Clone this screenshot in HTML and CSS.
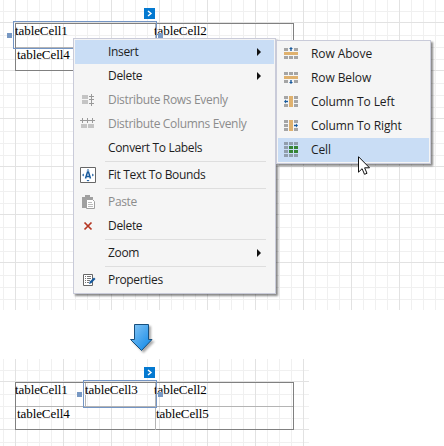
FILE: index.html
```html
<!DOCTYPE html>
<html lang="en">
<head>
<meta charset="utf-8">
<title>Insert table cell</title>
<link rel="stylesheet" href="styles.css">
</head>
<body>
<main class="stage">
  <section class="surface before">
    <div class="table">
      <div class="cell c1">tableCell1</div><div class="cell">tableCell2</div>
      <div class="cell c4">tableCell4</div><div class="cell"></div>
    </div>
    <div class="selection first"></div>
    <i class="handle h1"></i><i class="handle h2"></i>
    <svg class="tag" viewBox="0 0 11 11"><path d="M0 0h11v11H0z" fill="#0479d0"/><path d="M4 3l3 2.5L4 8" fill="none" stroke="#fff" stroke-width="1.4"/></svg>
  </section>
  <div class="gap">
    <svg class="arrow" viewBox="0 0 26 32"><defs><linearGradient id="g" x1="0" y1="0" x2="1" y2="1"><stop offset="0" stop-color="#8bc8f5"/><stop offset="1" stop-color="#0784e6"/></linearGradient></defs><path d="M5.500 2.500h14v15h3.500L12.500 28.500 1.500 17.500h4z" fill="url(#g)" stroke="#174f7d"/></svg>
  </div>
  <section class="surface after">
    <div class="table">
      <div class="cell c1">tableCell1</div><div class="cell">tableCell2</div>
      <div class="cell c4">tableCell4</div><div class="cell c5">tableCell5</div>
    </div>
    <div class="selection third">tableCell3</div>
    <i class="handle h3"></i><i class="handle h4"></i>
    <svg class="tag" viewBox="0 0 11 11"><path d="M0 0h11v11H0z" fill="#0479d0"/><path d="M4 3l3 2.500L4 8" fill="none" stroke="#fff" stroke-width="1.4"/></svg>
  </section>

  <nav class="menu main">
    <div class="item on"><span class="icon"></span><span class="t">Insert</span><i class="more"></i></div>
    <div class="item"><span class="icon"></span><span class="t">Delete</span><i class="more"></i></div>
    <div class="item off"><svg class="icon" viewBox="0 0 16 16"><path d="M2 3h6v4H2zM2 8h6v4H2z" fill="#c4c4c4"/><path d="M11.500 2v12M9 4.500h5M9 7.500h5M9 11.500h5" stroke="#999" fill="none"/></svg><span class="t">Distribute Rows Evenly</span></div>
    <div class="item off"><svg class="icon" viewBox="0 0 16 16"><path d="M1 8h6v4H1zM8 8h6v4H8z" fill="#c4c4c4"/><path d="M0 4.500h15M2.500 2v5M7.500 2v5M12.500 2v5" stroke="#999" fill="none"/></svg><span class="t">Distribute Columns Evenly</span></div>
    <div class="item"><span class="icon"></span><span class="t">Convert To Labels</span></div>
    <hr>
    <div class="item"><svg class="icon" viewBox="0 0 16 16"><path d="M.5.5h15v15H.5z" fill="#fff" stroke="#666"/><path d="M5.500 11.500L7.500 5h1L10.500 11.500M6 9.500h4" fill="none" stroke="#17599c" stroke-width="1.500"/><path d="M6.500 3.500L8 2 9.500 3.500zM6.500 13L8 14.500 9.500 13zM3.800 6.500L2 8l1.800 1.500zM12.200 6.500L14 8l-1.800 1.500z" fill="#17599c"/></svg><span class="t">Fit Text To Bounds</span></div>
    <hr>
    <div class="item off"><svg class="icon" viewBox="0 0 16 16"><path d="M2 3h3V1h5v2h3v3H6v8H2z" fill="#a0a0a0"/><path d="M6.500 5.500h6l2 2v7h-8z" fill="#fff" stroke="#a0a0a0"/><path d="M8 8.500h4M8 10.500h5M8 12.500h5" stroke="#bbb"/></svg><span class="t">Paste</span></div>
    <div class="item"><svg class="icon" viewBox="0 0 16 16"><path d="M4.500 4.500l7 7M11.500 4.500l-7 7" stroke="#b53622" stroke-width="1.700"/></svg><span class="t">Delete</span></div>
    <hr>
    <div class="item"><span class="icon"></span><span class="t">Zoom</span><i class="more"></i></div>
    <hr>
    <div class="item"><svg class="icon" viewBox="0 0 16 16"><path d="M3.500 2.500h9v11h-9z" fill="#fff" stroke="#666"/><path d="M5 4.500h1M7 4.500h4M5 6.500h1M7 6.500h4M5 8.500h1M7 8.500h3M5 10.500h1M7 10.500h2" stroke="#777"/><path d="M9 12l.8-2.500L14 5.500l1.500 1.500-4.200 4.200z" fill="#17599c"/></svg><span class="t">Properties</span></div>
  </nav>

  <nav class="menu sub">
    <div class="item"><svg class="icon" viewBox="0 0 14 12"><path d="M0 0h4v3H0zM10 0h4v3h-4zM0 8h4v3H0zM5 8h4v3H5zM10 8h4v3h-4z" fill="#a5a5a5"/><path d="M0 4h14v3H0z" fill="#dfb16e"/><path d="M7 -1L9 1H7.700V3H6.300V1H5z" fill="#17599c"/></svg><span class="t">Row Above</span></div>
    <div class="item"><svg class="icon" viewBox="0 0 14 12"><path d="M0 0h4v3H0zM5 0h4v3H5zM10 0h4v3h-4zM0 8h4v3H0zM10 8h4v3h-4z" fill="#a5a5a5"/><path d="M0 4h14v3H0z" fill="#dfb16e"/><path d="M7 12L9 10H7.700V8H6.300V10H5z" fill="#17599c"/></svg><span class="t">Row Below</span></div>
    <div class="item"><svg class="icon" viewBox="0 0 14 12"><path d="M0 0h4v3H0zM10 0h4v3h-4zM10 4h4v3h-4zM0 8h4v3H0zM10 8h4v3h-4z" fill="#a5a5a5"/><path d="M5 0h4v11H5z" fill="#dfb16e"/><path d="M0 5.500L2 3.500V4.800H4V6.200H2V7.500z" fill="#17599c"/></svg><span class="t">Column To Left</span></div>
    <div class="item"><svg class="icon" viewBox="0 0 14 12"><path d="M0 0h4v3H0zM0 4h4v3H0zM10 0h4v3h-4zM0 8h4v3H0zM10 8h4v3h-4z" fill="#a5a5a5"/><path d="M5 0h4v11H5z" fill="#dfb16e"/><path d="M14 5.500L12 3.500V4.800H10V6.200H12V7.500z" fill="#17599c"/></svg><span class="t">Column To Right</span></div>
    <div class="item on"><svg class="icon tall" viewBox="0 0 14 15"><path d="M0 0h4v3H0zM5 0h4v3H5zM10 0h4v3h-4zM0 4h4v3H0zM0 8h4v3H0zM0 12h4v3H0zM5 12h4v3H5zM10 12h4v3h-4z" fill="#919eac"/><path d="M5 4h4v3H5zM10 4h4v3h-4zM5 8h4v3H5zM10 8h4v3h-4z" fill="#368434"/></svg><span class="t">Cell</span></div>
  </nav>
  <svg class="cursor" viewBox="0 0 12 19"><path d="M.5.7v15.500l3.600-3.500 2.400 5.600 2.500-1-2.400-5.500h4.900z" fill="#fff" stroke="#111"/></svg>
</main>
</body>
</html>
```
FILE: styles.css
```css
* { box-sizing: border-box; }
body { margin: 0; background: #fff; }
.stage { position: relative; width: 444px; height: 446px; overflow: hidden; display: flex; flex-direction: column; }
.surface {
  position: relative;
  background-image:
    linear-gradient(90deg, #e2e2e2 1px, transparent 1px),
    linear-gradient(#e2e2e2 1px, transparent 1px),
    linear-gradient(90deg, #f0f0f0 1px, transparent 1px),
    linear-gradient(transparent 13px, #f0f0f0 13px, #f0f0f0 14px, transparent 14px, transparent 25px, #f0f0f0 25px, #f0f0f0 26px, transparent 26px, transparent 37px, #f0f0f0 37px, #f0f0f0 38px, transparent 38px);
  background-size: 48px 48px, 48px 48px, 12px 12px, 48px 48px;
  background-position: 15px 22px, 15px 22px, 3px 0, 15px 22px;
}
.before { height: 310px; padding: 23px 0 0 15px; }
.gap { height: 49px; padding: 12px 0 0 129px; }
.arrow { display: block; width: 26px; height: 32px; filter: drop-shadow(2px 2px 1px #0005); }
.after { width: 309px; height: 87px; padding: 23px 0 0 15px; }
.table, .third {
  font: 13px/14px "Liberation Serif", serif;
  letter-spacing: -.08px;
  color: #000;
}
.table {
  display: grid;
  grid-template: 24px 23px / 140px 137px;
  width: 279px;
  height: 48px;
  border: 1px solid #808080;
}
.cell { border-right: 1px solid #b4b4b4; border-bottom: 1px solid #b4b4b4; white-space: nowrap; text-indent: -1px; }
.cell:nth-child(even) { border-right: 0; text-indent: -2px; }
.cell:nth-child(n+3) { border-bottom: 0; text-indent: 1px; }
.cell.c5 { text-indent: 0; }
.selection { position: absolute; border: 1px solid #7495c4; }
.first { left: 13px; top: 21px; width: 144px; height: 28px; }
.third { left: 83px; top: 21px; width: 74px; height: 28px; padding: 2px 0 0 1px; }
.third::before { content: ""; position: absolute; left: 1px; top: 2px; width: 1px; height: 23px; background: #b4b4b4; z-index: -1; }
.handle { position: absolute; width: 5px; height: 5px; background: #7898c3; }
.h1 { left: 7px; top: 33px; }
.h2 { left: 158px; top: 33px; }
.h3 { left: 77px; top: 33px; }
.h4 { left: 158px; top: 33px; }
.tag { position: absolute; left: 144px; top: 8px; width: 11px; height: 11px; }
.menu {
  position: absolute;
  background: #f5f5f5;
  border: 1px solid #c9cbd9;
  box-shadow: 2px 2px 2px #0007;
  font: 12px/24px "Open Sans", "Noto Sans", sans-serif;
  color: #1e1e1e;
}
.main { left: 73px; top: 38px; width: 203px; height: 256px; padding: 1px; letter-spacing: -.33px; }
.sub { left: 276px; top: 40px; width: 155px; height: 124px; padding: 1px; letter-spacing: -.1px; }
.item { display: flex; align-items: center; height: 24px; }
.on { background: #c9ddf5; }
.off { color: #8c8c8c; }
.icon { flex: none; width: 16px; height: 16px; margin: 0 12px 0 5px; overflow: visible; }
.sub .icon { width: 14px; height: 12px; margin: 0 13px 0 6px; }
.sub .tall { height: 15px; margin-bottom: 1px; }
.t { white-space: nowrap; }
.more { margin: 0 13px 0 auto; border: 4px solid transparent; border-left-color: #111; border-right: 0; }
.main hr { height: 1px; margin: 1px 8px 1px 30px; border: 0; background: #dedede; }
.cursor { position: absolute; left: 358px; top: 156px; width: 12px; height: 19px; }
```
